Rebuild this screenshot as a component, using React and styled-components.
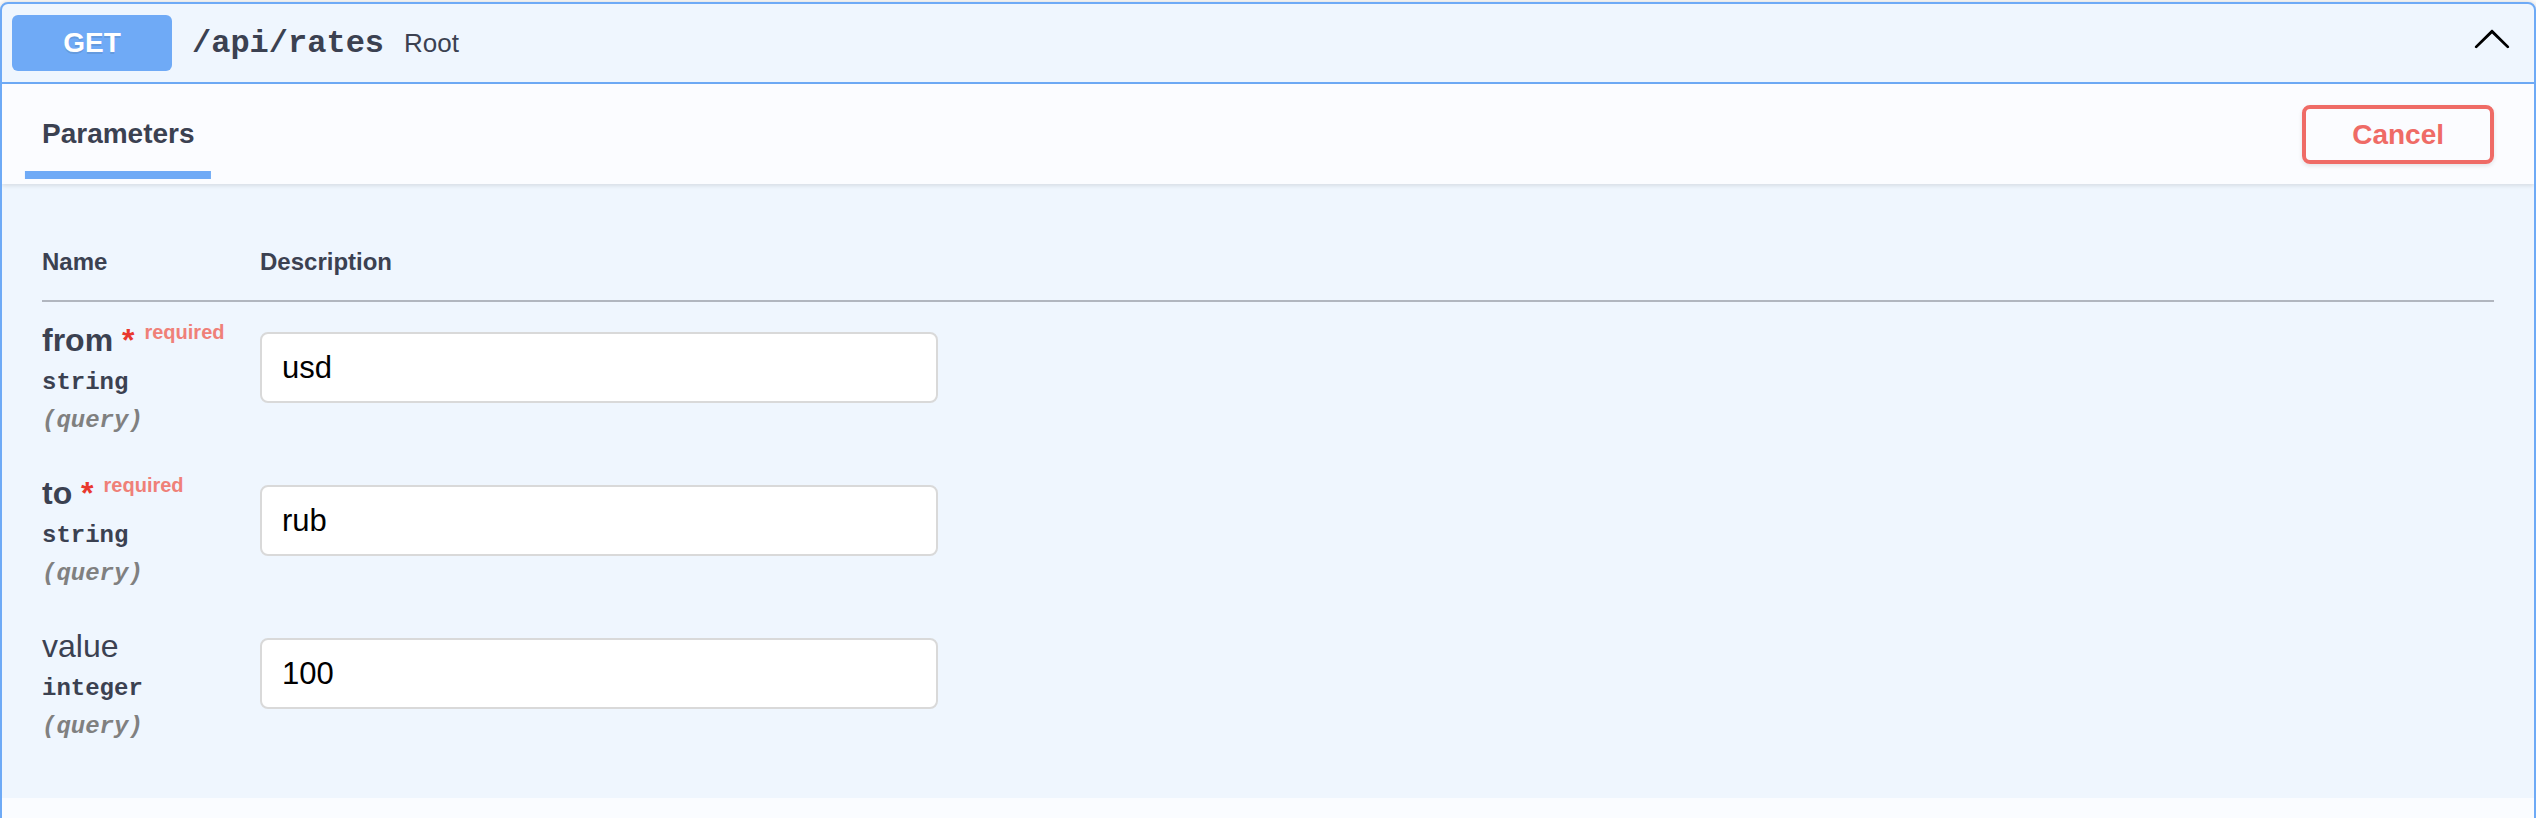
import React from "react";
import styled, { createGlobalStyle } from "styled-components";

const GlobalStyle = createGlobalStyle`
  html, body {
    margin: 0;
    padding: 0;
    background: #fff;
    overflow: hidden;
  }
  body {
    font-family: "Liberation Sans", Arial, sans-serif;
    color: #3b4151;
  }
`;

const Page = styled.div`
  padding-top: 2px;
`;

const Opblock = styled.div`
  border: 2px solid #6eaaf6;
  border-radius: 8px;
  background: #eff6fe;
  box-shadow: 0 0 6px rgba(0, 0, 0, 0.19);
  overflow: hidden;
`;

const Summary = styled.div`
  display: flex;
  align-items: center;
  padding: 11px 10px;
  border-bottom: 2px solid #6eaaf6;
`;

const Method = styled.span`
  min-width: 160px;
  padding: 12px 0;
  text-align: center;
  background: #6faaf6;
  color: #fff;
  border-radius: 6px;
  font-size: 28px;
  font-weight: 700;
  line-height: 32px;
  text-shadow: 0 2px 0 rgba(0, 0, 0, 0.1);
`;

const Path = styled.span`
  font-family: "Liberation Mono", "Courier New", monospace;
  font-size: 32px;
  font-weight: 700;
  padding: 0 20px;
  color: #3b4151;
`;

const Description = styled.span`
  flex: 1;
  font-size: 26px;
  color: #3b4151;
`;

const Arrow = styled.svg`
  width: 40px;
  height: 40px;
  align-self: flex-start;
  margin: 3px 12px 0 0;
  fill: #000;
`;

const SectionHeader = styled.div`
  display: flex;
  align-items: center;
  justify-content: space-between;
  box-sizing: border-box;
  min-height: 100px;
  padding: 16px 40px;
  background: #fbfcff;
  box-shadow: 0 2px 4px rgba(0, 0, 0, 0.1);
`;

const TabTitle = styled.h4`
  margin: 0;
  font-size: 28px;
  font-weight: 700;
  line-height: 32px;
  color: #3b4151;

  span {
    position: relative;
  }
  span::after {
    content: "";
    position: absolute;
    left: 50%;
    bottom: -30px;
    width: 122%;
    height: 8px;
    transform: translateX(-50%);
    background: #6faaf6;
  }
`;

const CancelButton = styled.button`
  font-family: "Liberation Sans", Arial, sans-serif;
  font-size: 28px;
  font-weight: 700;
  line-height: 31px;
  padding: 10px 46px;
  border: 4px solid #ef6b66;
  border-radius: 8px;
  background: transparent;
  color: #ef6b66;
  box-shadow: 0 2px 4px rgba(0, 0, 0, 0.1);
`;

const TableContainer = styled.div`
  padding: 40px 40px 37px;
`;

const Table = styled.table`
  width: 100%;
  border-collapse: collapse;
`;

const Th = styled.th`
  text-align: left;
  font-size: 24px;
  font-weight: 700;
  padding: 24px 0;
  color: #3b4151;
  border-bottom: 2px solid #b1b6bf;
  width: ${(p) => (p.$name ? "218px" : "auto")};
`;

const Td = styled.td`
  padding: 20px 0;
  vertical-align: top;
`;

const ParamName = styled.div`
  font-size: 32px;
  line-height: 37px;
  font-weight: ${(p) => (p.$required ? 700 : 400)};
  color: #3b4151;
  white-space: nowrap;
`;

const Star = styled.span`
  color: #e9382e;
`;

const Required = styled.span`
  position: relative;
  top: -12px;
  font-size: 20px;
  line-height: 0;
  padding: 10px;
  color: #ef8078;
`;

const ParamType = styled.div`
  font-family: "Liberation Mono", "Courier New", monospace;
  font-size: 24px;
  font-weight: 700;
  line-height: 28px;
  padding: 10px 0;
  color: #3b4151;
`;

const ParamIn = styled.div`
  font-family: "Liberation Mono", "Courier New", monospace;
  font-size: 24px;
  font-weight: 700;
  font-style: italic;
  line-height: 28px;
  color: #808080;
`;

const Input = styled.input`
  display: block;
  box-sizing: border-box;
  width: 678px;
  height: 71px;
  margin: 10px 0;
  padding: 0 20px;
  border: 2px solid #d9d9d9;
  border-radius: 8px;
  background: #fff;
  font-family: "Liberation Sans", Arial, sans-serif;
  font-size: 31px;
  color: #000;
  outline: none;
`;

const Footer = styled.div`
  height: 100px;
  background: #fafcff;
`;

const params = [
  { name: "from", type: "string", required: true, value: "usd" },
  { name: "to", type: "string", required: true, value: "rub" },
  { name: "value", type: "integer", required: false, value: "100" },
];

function App() {
  return (
    <Page>
      <GlobalStyle />
      <Opblock>
        <Summary>
          <Method>GET</Method>
          <Path>/api/rates</Path>
          <Description>Root</Description>
          <Arrow viewBox="0 0 20 20">
            <path d="M 17.418 14.908 C 17.69 15.176 18.127 15.176 18.397 14.908 C 18.667 14.64 18.668 14.207 18.397 13.939 L 10.489 6.109 C 10.219 5.841 9.782 5.841 9.51 6.109 L 1.602 13.939 C 1.332 14.207 1.332 14.64 1.602 14.908 C 1.873 15.176 2.311 15.176 2.581 14.908 L 10 7.767 L 17.418 14.908 Z" />
          </Arrow>
        </Summary>
        <SectionHeader>
          <TabTitle>
            <span>Parameters</span>
          </TabTitle>
          <CancelButton>Cancel</CancelButton>
        </SectionHeader>
        <TableContainer>
          <Table>
            <thead>
              <tr>
                <Th $name>Name</Th>
                <Th>Description</Th>
              </tr>
            </thead>
            <tbody>
              {params.map((p) => (
                <tr key={p.name}>
                  <Td>
                    <ParamName $required={p.required}>
                      {p.name}
                      {p.required && <Star>&nbsp;*</Star>}
                      {p.required && <Required>required</Required>}
                    </ParamName>
                    <ParamType>{p.type}</ParamType>
                    <ParamIn>(query)</ParamIn>
                  </Td>
                  <Td>
                    <Input type="text" defaultValue={p.value} />
                  </Td>
                </tr>
              ))}
            </tbody>
          </Table>
        </TableContainer>
        <Footer />
      </Opblock>
    </Page>
  );
}

export default App;
